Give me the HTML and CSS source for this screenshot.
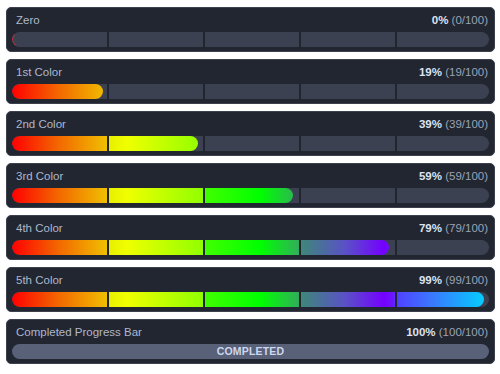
FILE: index.html
```html
<!DOCTYPE html>
<html lang="en">
<head>
    <meta charset="UTF-8">
    <meta name="viewport" content="width=device-width, initial-scale=1.0">
    <title>Progress Bars</title>
    <link rel="stylesheet" href="styles.css">
</head>
<body>
    <div class="list">
        <div class="card">
            <div class="head"><span class="label">Zero</span><span class="value"><b>0%</b> (0/100)</span></div>
            <div class="bar">
                <div class="fill empty"></div>
                <div class="ticks"><i></i><i></i><i></i><i></i><i></i></div>
            </div>
        </div>
        <div class="card">
            <div class="head"><span class="label">1st Color</span><span class="value"><b>19%</b> (19/100)</span></div>
            <div class="bar">
                <div class="fill" style="width: 19%"><div class="grad" style="width: 526.3%"></div></div>
                <div class="ticks"><i></i><i></i><i></i><i></i><i></i></div>
            </div>
        </div>
        <div class="card">
            <div class="head"><span class="label">2nd Color</span><span class="value"><b>39%</b> (39/100)</span></div>
            <div class="bar">
                <div class="fill" style="width: 39%"><div class="grad" style="width: 256.4%"></div></div>
                <div class="ticks"><i></i><i></i><i></i><i></i><i></i></div>
            </div>
        </div>
        <div class="card">
            <div class="head"><span class="label">3rd Color</span><span class="value"><b>59%</b> (59/100)</span></div>
            <div class="bar">
                <div class="fill" style="width: 59%"><div class="grad" style="width: 169.5%"></div></div>
                <div class="ticks"><i></i><i></i><i></i><i></i><i></i></div>
            </div>
        </div>
        <div class="card">
            <div class="head"><span class="label">4th Color</span><span class="value"><b>79%</b> (79/100)</span></div>
            <div class="bar">
                <div class="fill" style="width: 79%"><div class="grad" style="width: 126.6%"></div></div>
                <div class="ticks"><i></i><i></i><i></i><i></i><i></i></div>
            </div>
        </div>
        <div class="card">
            <div class="head"><span class="label">5th Color</span><span class="value"><b>99%</b> (99/100)</span></div>
            <div class="bar">
                <div class="fill" style="width: 99%"><div class="grad" style="width: 101%"></div></div>
                <div class="ticks"><i></i><i></i><i></i><i></i><i></i></div>
            </div>
        </div>
        <div class="card">
            <div class="head"><span class="label">Completed Progress Bar</span><span class="value"><b>100%</b> (100/100)</span></div>
            <div class="bar done">COMPLETED</div>
        </div>
    </div>
</body>
</html>
```
FILE: styles.css
```css
body {
    margin: 0;
    padding: 7px 5px 0 6px;
    background: #ffffff;
    font-family: "Liberation Sans", Arial, sans-serif;
}
.list {
    display: flex;
    flex-direction: column;
    gap: 7px;
}
.card {
    background: #222631;
    border: 1px solid #3b404c;
    border-radius: 5px;
    padding: 0 5px 4px 5px;
}
.head {
    height: 24px;
    display: flex;
    align-items: center;
    justify-content: space-between;
    font-size: 11.5px;
    padding: 0 1px 0 4px;
}
.label {
    color: #aeb8cc;
}
.value {
    color: #9aa3b5;
}
.value b {
    color: #dde3ee;
    font-weight: bold;
}
.bar {
    position: relative;
    height: 15px;
    border-radius: 8px;
    background: #3b4150;
    overflow: hidden;
}
.fill {
    height: 100%;
    border-radius: 8px;
    overflow: hidden;
}
.grad {
    height: 100%;
    background: linear-gradient(to right,
        #ff0000 0%, #f26a00 10%, #f0c000 20%,
        #e8f000 20.5%, #f0ff00 24%, #90ff00 40%,
        #40ff00 40.5%, #00ff00 52%, #30b058 60%,
        #3e8878 60.5%, #5a50c8 70%, #7400ff 78%, #6a18ff 80%,
        #5040ff 80.5%, #3a78ff 88%, #00d4ff 100%);
}
.fill.empty {
    width: 8px;
    box-sizing: border-box;
    border: 1px solid transparent;
    border-left-color: #c0303a;
    border-radius: 8px 0 0 8px;
}
.ticks {
    position: absolute;
    top: 0;
    bottom: 0;
    left: 1px;
    right: 0;
    display: grid;
    grid-template-columns: 96px 96px 96px 96px 1fr;
}
.ticks i {
    border-right: 2px solid #222631;
}
.ticks i:last-child {
    border-right: none;
}
.bar.done {
    background: #596179;
    color: #cdd8ee;
    font-size: 10.5px;
    font-weight: bold;
    text-align: center;
    line-height: 15px;
    letter-spacing: 0.2px;
}
```
